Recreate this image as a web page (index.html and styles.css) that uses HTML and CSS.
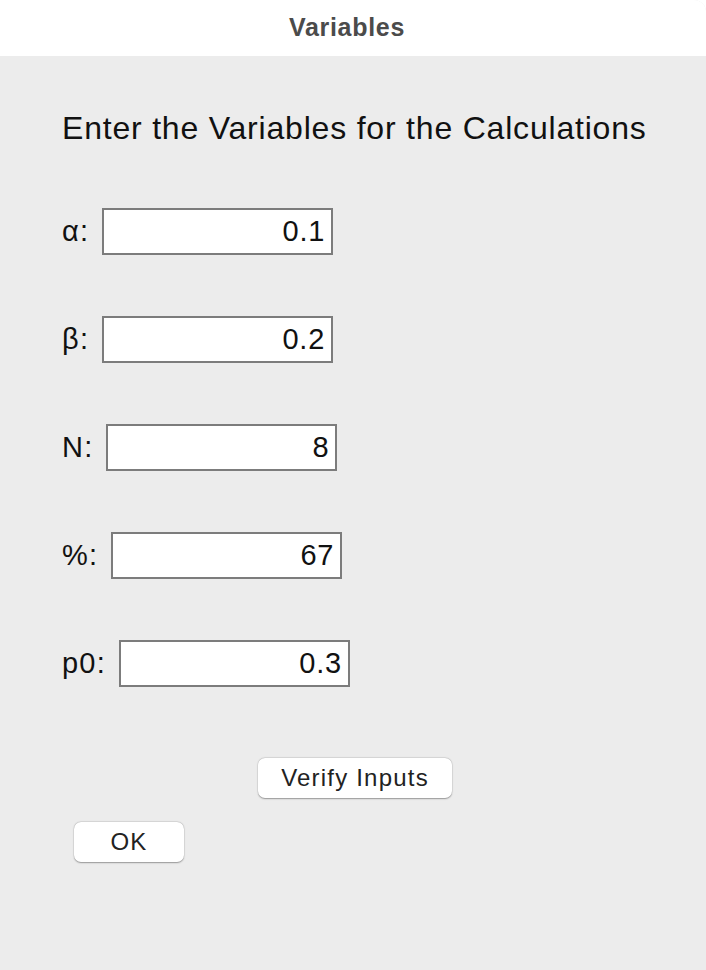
FILE: index.html
```html
<!DOCTYPE html>
<html lang="en">
<head>
<meta charset="utf-8">
<title>Variables</title>
<link rel="stylesheet" href="styles.css">
</head>
<body>
<div class="window">
  <div class="titlebar">Variables</div>
  <div class="content">
    <h1 class="heading">Enter the Variables for the Calculations</h1>
    <div class="rows">
      <div class="row"><span class="label">α:</span><div class="field">0.1</div></div>
      <div class="row"><span class="label">β:</span><div class="field">0.2</div></div>
      <div class="row"><span class="label">N:</span><div class="field">8</div></div>
      <div class="row"><span class="label">%:</span><div class="field">67</div></div>
      <div class="row"><span class="label">p0:</span><div class="field">0.3</div></div>
    </div>
    <div class="actions">
      <button class="btn btn-verify">Verify Inputs</button>
      <button class="btn btn-ok">OK</button>
    </div>
  </div>
</div>
</body>
</html>
```
FILE: styles.css
```css
* { box-sizing: border-box; }
html, body { margin: 0; padding: 0; background: #ffffff; }
body {
  width: 706px;
  height: 970px;
  overflow: hidden;
  font-family: "Liberation Sans", Arial, sans-serif;
}
.window {
  width: 706px;
  height: 970px;
  background: #ececec;
  border-top-right-radius: 12px;
  overflow: hidden;
  display: flex;
  flex-direction: column;
}
.titlebar {
  height: 56px;
  flex: none;
  background: #ffffff;
  text-align: center;
  font-weight: bold;
  font-size: 25px;
  letter-spacing: 0.7px;
  line-height: 54px;
  color: #4b4b4b;
  padding-right: 12px;
}
.content {
  padding-left: 62px;
  flex: 1;
}
.heading {
  margin: 54px 0 0 0;
  font-weight: normal;
  font-size: 32px;
  line-height: 36px;
  letter-spacing: 0.8px;
  color: #111111;
}
.rows {
  margin-top: 62px;
  display: flex;
  flex-direction: column;
  gap: 61px;
}
.row {
  display: flex;
  align-items: center;
  height: 47px;
}
.label {
  font-size: 29px;
  letter-spacing: 1.2px;
  color: #111111;
  margin-right: 13px;
}
.field {
  width: 231px;
  height: 47px;
  background: #ffffff;
  border: 2px solid #7c7c7c;
  text-align: right;
  padding-right: 6px;
  font-size: 29px;
  letter-spacing: 0.8px;
  line-height: 43px;
  color: #111111;
}
.actions {
  margin-top: 71px;
  display: flex;
  flex-direction: column;
  align-items: flex-start;
  gap: 24px;
}
.btn {
  font-family: "Liberation Sans", Arial, sans-serif;
  font-size: 24px;
  letter-spacing: 1.2px;
  color: #222222;
  background: #ffffff;
  border: none;
  border-radius: 7px;
  height: 40px;
  padding: 0;
  box-shadow: 0 0.5px 1.5px rgba(0, 0, 0, 0.35), 0 0 0 0.5px rgba(0, 0, 0, 0.06);
}
.btn-verify {
  width: 194px;
  margin-left: 196px;
}
.btn-ok {
  width: 110px;
  margin-left: 12px;
}
```
